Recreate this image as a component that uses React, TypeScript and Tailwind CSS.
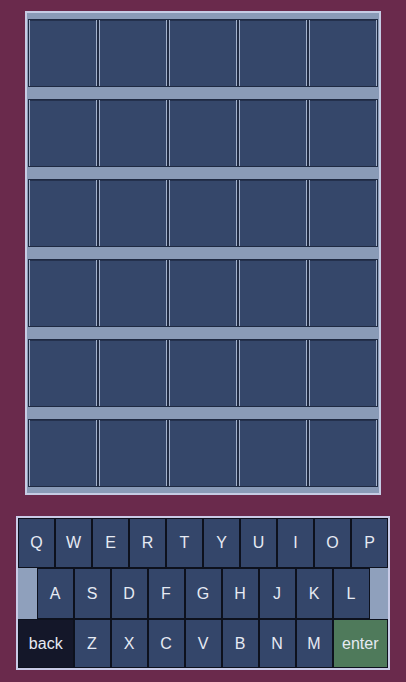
const ROWS = 6;
const COLS = 5;

const KEYS_TOP = ["Q", "W", "E", "R", "T", "Y", "U", "I", "O", "P"];
const KEYS_MID = ["A", "S", "D", "F", "G", "H", "J", "K", "L"];
const KEYS_BOT = ["Z", "X", "C", "V", "B", "N", "M"];

function Tile() {
  return (
    <div className="w-[70px] h-[68px] bg-[#35476a] border border-[#1f2a42] shadow-[inset_1px_0_0_#a3b1cb,inset_-1px_0_0_#a3b1cb,inset_0_1px_0_#24314d]" />
  );
}

function Key({ label, wide, tone }: { label: string; wide?: boolean; tone?: "dark" | "green" }) {
  const bg = tone === "dark" ? "bg-[#141729]" : tone === "green" ? "bg-[#4f7a5b]" : "bg-[#34466a]";
  return (
    <div
      className={`${wide ? "w-[55.5px]" : "w-[37px]"} h-full ${bg} border border-[#0d111d] flex items-center justify-center text-[16px] text-[#e6eaf3]`}
    >
      {label}
    </div>
  );
}

export default function App() {
  return (
    <div
      className="w-[406px] h-[682px] bg-[#6a2a4c] flex flex-col items-center pt-[11px]"
      style={{ fontFamily: '"Liberation Sans", Arial, sans-serif' }}
    >
      <div className="w-[356px] border-2 border-[#c6cce4] bg-[#8a9bb7] px-px py-[6px] flex flex-col gap-[12px]">
        {Array.from({ length: ROWS }).map((_, r) => (
          <div key={r} className="flex">
            {Array.from({ length: COLS }).map((_, c) => (
              <Tile key={c} />
            ))}
          </div>
        ))}
      </div>

      <div className="mt-[21px] w-[374px] border-2 border-[#c9cbe7] bg-[#8a9bb7] flex flex-col">
        <div className="flex h-[50px]">
          {KEYS_TOP.map((k) => (
            <Key key={k} label={k} />
          ))}
        </div>
        <div className="flex h-[51px]">
          <div className="w-[18.5px] h-full bg-[#8fa0bc]" />
          {KEYS_MID.map((k) => (
            <Key key={k} label={k} />
          ))}
          <div className="w-[18.5px] h-full bg-[#8fa0bc]" />
        </div>
        <div className="flex h-[49px]">
          <Key label="back" wide tone="dark" />
          {KEYS_BOT.map((k) => (
            <Key key={k} label={k} />
          ))}
          <Key label="enter" wide tone="green" />
        </div>
      </div>
    </div>
  );
}
